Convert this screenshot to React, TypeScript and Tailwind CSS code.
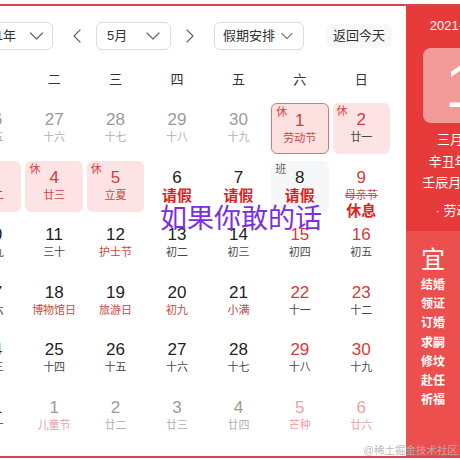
import { clsx } from "clsx";

type Day = {
  n: string;
  sub: string;
  numCls?: string;
  subCls?: string;
  bg?: "rest" | "today" | "work";
  tag?: "休" | "班";
  leave?: boolean;
  extra?: string;
};

const G = "text-[#9a9a9a]";
const GL = "text-[#b0b0b0]";
const DK = "text-[#222]";
const SUB = "text-[#484848]";
const R = "text-[#d63a3a]";
const RS = "text-[#c9483f]";
const PALE = "text-[#e7a3a3]";

const WEEK = ["一", "二", "三", "四", "五", "六", "日"];

const ROWS: Day[][] = [
  [
    { n: "26", sub: "十五", numCls: G, subCls: GL },
    { n: "27", sub: "十六", numCls: G, subCls: GL },
    { n: "28", sub: "十七", numCls: G, subCls: GL },
    { n: "29", sub: "十八", numCls: G, subCls: GL },
    { n: "30", sub: "十九", numCls: G, subCls: GL },
    { n: "1", sub: "劳动节", numCls: R, subCls: RS, bg: "today", tag: "休" },
    { n: "2", sub: "廿一", numCls: R, subCls: SUB, bg: "rest", tag: "休" },
  ],
  [
    { n: "3", sub: "廿二", numCls: R, subCls: RS, bg: "rest", tag: "休" },
    { n: "4", sub: "廿三", numCls: R, subCls: RS, bg: "rest", tag: "休" },
    { n: "5", sub: "立夏", numCls: R, subCls: RS, bg: "rest", tag: "休" },
    { n: "6", sub: "请假", numCls: DK, leave: true },
    { n: "7", sub: "请假", numCls: DK, leave: true },
    { n: "8", sub: "请假", numCls: DK, leave: true, bg: "work", tag: "班" },
    { n: "9", sub: "母亲节", numCls: R, subCls: RS + " line-through", extra: "休息" },
  ],
  [
    { n: "10", sub: "廿九", numCls: DK, subCls: SUB },
    { n: "11", sub: "三十", numCls: DK, subCls: SUB },
    { n: "12", sub: "护士节", numCls: DK, subCls: RS },
    { n: "13", sub: "初二", numCls: DK, subCls: SUB },
    { n: "14", sub: "初三", numCls: DK, subCls: SUB },
    { n: "15", sub: "初四", numCls: R, subCls: SUB },
    { n: "16", sub: "初五", numCls: R, subCls: SUB },
  ],
  [
    { n: "17", sub: "初六", numCls: DK, subCls: SUB },
    { n: "18", sub: "博物馆日", numCls: DK, subCls: RS },
    { n: "19", sub: "旅游日", numCls: DK, subCls: RS },
    { n: "20", sub: "初九", numCls: DK, subCls: RS },
    { n: "21", sub: "小满", numCls: DK, subCls: RS },
    { n: "22", sub: "十一", numCls: R, subCls: SUB },
    { n: "23", sub: "十二", numCls: R, subCls: SUB },
  ],
  [
    { n: "24", sub: "十三", numCls: DK, subCls: SUB },
    { n: "25", sub: "十四", numCls: DK, subCls: SUB },
    { n: "26", sub: "十五", numCls: DK, subCls: SUB },
    { n: "27", sub: "十六", numCls: DK, subCls: SUB },
    { n: "28", sub: "十七", numCls: DK, subCls: SUB },
    { n: "29", sub: "十八", numCls: R, subCls: SUB },
    { n: "30", sub: "十九", numCls: R, subCls: SUB },
  ],
  [
    { n: "31", sub: "二十", numCls: DK, subCls: SUB },
    { n: "1", sub: "儿童节", numCls: G, subCls: PALE },
    { n: "2", sub: "廿二", numCls: G, subCls: GL },
    { n: "3", sub: "廿三", numCls: G, subCls: GL },
    { n: "4", sub: "廿四", numCls: G, subCls: GL },
    { n: "5", sub: "芒种", numCls: PALE, subCls: PALE },
    { n: "6", sub: "廿六", numCls: PALE, subCls: PALE },
  ],
];

const YI = ["结婚", "领证", "订婚", "求嗣", "修坟", "赴任", "祈福"];

function ChevronDown({ w = 14 }: { w?: number }) {
  return (
    <svg width={w} height="8" viewBox="0 0 14 8" fill="none" aria-hidden>
      <path d="M1 1l6 6 6-6" stroke="#666" strokeWidth="1.2" strokeLinecap="round" strokeLinejoin="round" />
    </svg>
  );
}

function Arrow({ dir }: { dir: "l" | "r" }) {
  return (
    <svg width="8" height="14" viewBox="0 0 8 14" fill="none" aria-hidden>
      <path
        d={dir === "l" ? "M7 1L1 7l6 6" : "M1 1l6 6-6 6"}
        stroke="#666"
        strokeWidth="1.2"
        strokeLinecap="round"
        strokeLinejoin="round"
      />
    </svg>
  );
}

function DayCell({ c }: { c: Day }) {
  return (
    <div className="h-[57.6px] px-[2px] py-[3px]">
      <div
        className={clsx(
          "relative flex h-[51px] flex-col items-center rounded-[6px] pt-[7px]",
          c.bg === "rest" && "bg-[#fde3e3]",
          c.bg === "today" && "border-[1.5px] border-[#e07272] bg-[#fde1e1] pt-[5.5px]",
          c.bg === "work" && "bg-[#f6f7f9]"
        )}
      >
        {c.tag && (
          <span
            className={clsx(
              "absolute left-[4px] top-[1px] text-[11px] leading-[14px]",
              c.tag === "休" ? "text-[#d94242]" : "text-[#666]"
            )}
          >
            {c.tag}
          </span>
        )}
        <span className={clsx("text-[17px] leading-[20px]", c.numCls)}>{c.n}</span>
        {c.leave ? (
          <span className="text-[15px] font-bold leading-[15px] text-[#e01f1f]">{c.sub}</span>
        ) : (
          <span className={clsx("whitespace-nowrap text-[11px] leading-[14px]", c.subCls)}>{c.sub}</span>
        )}
        {c.extra && (
          <span className="text-[15px] font-bold leading-[18px] text-[#e01f1f]">{c.extra}</span>
        )}
      </div>
    </div>
  );
}

export default function App() {
  return (
    <div
      className="relative h-[460px] w-[460px] overflow-hidden bg-white"
      style={{ fontFamily: '"Liberation Sans", "Noto Sans CJK SC", sans-serif' }}
    >
      <div className="h-[4px]" />
      <div className="h-[2px] bg-[#d6464c]" />

      <div className="flex h-[450px]">
        {/* calendar */}
        <div className="relative w-[406px] shrink-0 overflow-hidden">
          <div className="mt-[16px] flex h-[28px] items-center text-[13px] text-[#333]">
            <div className="-ml-[40px] flex h-[28px] w-[93px] shrink-0 items-center rounded-[6px] border border-[#dcdcdc] pl-[13px] pr-[8px]">
              <span>2021年</span>
              <span className="ml-auto">
                <ChevronDown w={15} />
              </span>
            </div>
            <span className="ml-[20px] flex">
              <Arrow dir="l" />
            </span>
            <div className="ml-[15px] flex h-[28px] w-[75px] shrink-0 items-center rounded-[6px] border border-[#dcdcdc] pl-[10px] pr-[10px]">
              <span>5月</span>
              <span className="ml-auto">
                <ChevronDown />
              </span>
            </div>
            <span className="ml-[15px] flex">
              <Arrow dir="r" />
            </span>
            <div className="ml-[20px] flex h-[28px] w-[90px] shrink-0 items-center rounded-[6px] border border-[#dcdcdc] pl-[8px] pr-[10px]">
              <span>假期安排</span>
              <span className="ml-auto">
                <ChevronDown w={12} />
              </span>
            </div>
            <div className="ml-[22px] flex h-[24px] items-center rounded-[6px] bg-[#f8f8f9] px-[7px]">
              返回今天
            </div>
          </div>

          <div className="-ml-[38px] mt-[16px] grid h-[28px] w-[430px] grid-cols-7 items-center text-center text-[13px] text-[#333]">
            {WEEK.map((w) => (
              <span key={w}>{w}</span>
            ))}
          </div>

          <div className="-ml-[38px] mt-[6px] grid w-[430px] grid-cols-7">
            {ROWS.flat().map((c, i) => (
              <DayCell key={i} c={c} />
            ))}
          </div>

          <span className="absolute left-[160px] top-[200px] whitespace-nowrap text-[27px] leading-none text-[#7b2fe0]">
            如果你敢的话
          </span>
        </div>

        {/* side panel */}
        <div className="flex flex-1 flex-col overflow-hidden text-white">
          <div className="flex h-[225px] w-[114px] shrink-0 flex-col items-center bg-[#e73a3b]">
            <div className="mt-[11px] text-[13px] leading-[18px]">2021-05-01</div>
            <div className="mt-[13px] flex h-[75px] w-[80px] items-center rounded-[8px] bg-[#f29a9a] pl-[22px]">
              <span className="text-[62px] leading-none">1</span>
            </div>
            <div className="mt-[6px] flex flex-col items-center whitespace-nowrap text-[13px] leading-[21.5px]">
              <span>三月二十</span>
              <span>辛丑年 牛年</span>
              <span>壬辰月 丙子日</span>
            </div>
            <div className="mt-[8px] whitespace-nowrap text-[13px] leading-[18px]">· 劳动节 ·</div>
          </div>
          <div className="flex flex-1 bg-[#ed4f4f]">
            <div className="flex w-[54px] flex-col items-center">
              <span className="mt-[15px] text-[24px] leading-[28px]">宜</span>
              <div className="mt-[2px] flex flex-col items-center text-[12px] font-bold leading-[19.2px]">
                {YI.map((y) => (
                  <span key={y}>{y}</span>
                ))}
              </div>
            </div>
          </div>
        </div>
      </div>

      <div className="h-[2px] bg-[#d6464c]" />

      <span className="absolute right-[2px] top-[444px] whitespace-nowrap text-[10.5px] leading-[12px] text-[#b4b4b4]/90">
        @稀土掘金技术社区
      </span>
    </div>
  );
}
